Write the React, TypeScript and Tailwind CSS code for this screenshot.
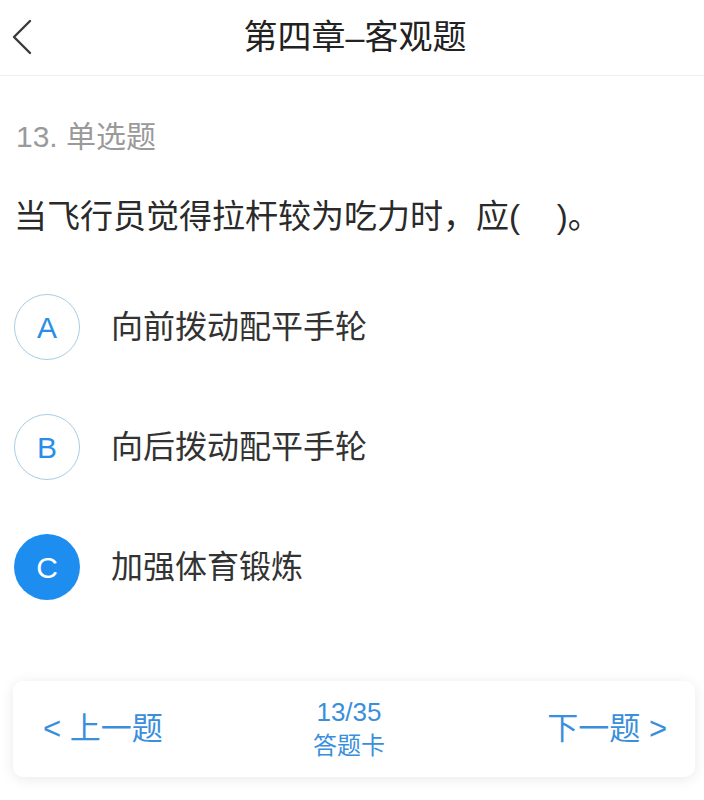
import React from "react";

const font = { fontFamily: '"Liberation Sans", "Noto Sans CJK SC", sans-serif' };

function Option({ letter, text, selected }: { letter: string; text: string; selected?: boolean }) {
  return (
    <div className="flex items-center h-[66px]">
      <div
        className={
          selected
            ? "w-[66px] h-[66px] rounded-full bg-[#1d8ef0] flex items-center justify-center text-white text-[30px] ml-[-2px]"
            : "w-[66px] h-[66px] rounded-full border border-[#a8cde0] flex items-center justify-center text-[#2a8ee6] text-[30px] ml-[-2px]"
        }
      >
        {letter}
      </div>
      <div className="ml-[31px] text-[32px] text-[#333333] leading-[66px]">{text}</div>
    </div>
  );
}

export default function App() {
  return (
    <div className="w-[704px] h-[800px] bg-white overflow-hidden" style={font}>
      <div className="relative h-[76px] border-b border-[#efefef] flex items-center justify-center">
        <svg className="absolute left-0 top-0" width="44" height="76" viewBox="0 0 44 76">
          <polyline points="30,21 14,37 30,53" fill="none" stroke="#3a3a3a" strokeWidth="2.4" strokeLinecap="round" strokeLinejoin="round" />
        </svg>
        <div className="text-[34px] text-[#222222] leading-[40px] mt-[-1px] ml-[6px]">第四章–客观题</div>
      </div>
      <div className="px-4">
        <div className="mt-[41px] h-[40px] leading-[40px] text-[30px] text-[#9a9a9a]">13. 单选题</div>
        <div className="mt-[38px] h-[44px] leading-[44px] text-[33px] text-[#2a2a2a] ml-[-2px]">当飞行员觉得拉杆较为吃力时，应(&nbsp;&nbsp;&nbsp;&nbsp;)。</div>
        <div className="mt-[55px] flex flex-col gap-[54px]">
          <Option letter="A" text="向前拨动配平手轮" />
          <Option letter="B" text="向后拨动配平手轮" />
          <Option letter="C" text="加强体育锻炼" selected />
        </div>
      </div>
      <div className="mt-[81px] ml-[13px] w-[682px] h-[96px] bg-white rounded-[10px] shadow-[0_2px_14px_rgba(0,0,0,0.09)] flex items-center justify-between pl-[30px] pr-[28px] text-[#3a8fdc]">
        <div className="text-[31px] leading-[40px]">&lt; 上一题</div>
        <div className="flex flex-col items-center mr-[12px]">
          <div className="text-[26px] leading-[30px]">13/35</div>
          <div className="text-[24px] leading-[30px] mt-[4px]">答题卡</div>
        </div>
        <div className="text-[31px] leading-[40px]">下一题 &gt;</div>
      </div>
    </div>
  );
}
